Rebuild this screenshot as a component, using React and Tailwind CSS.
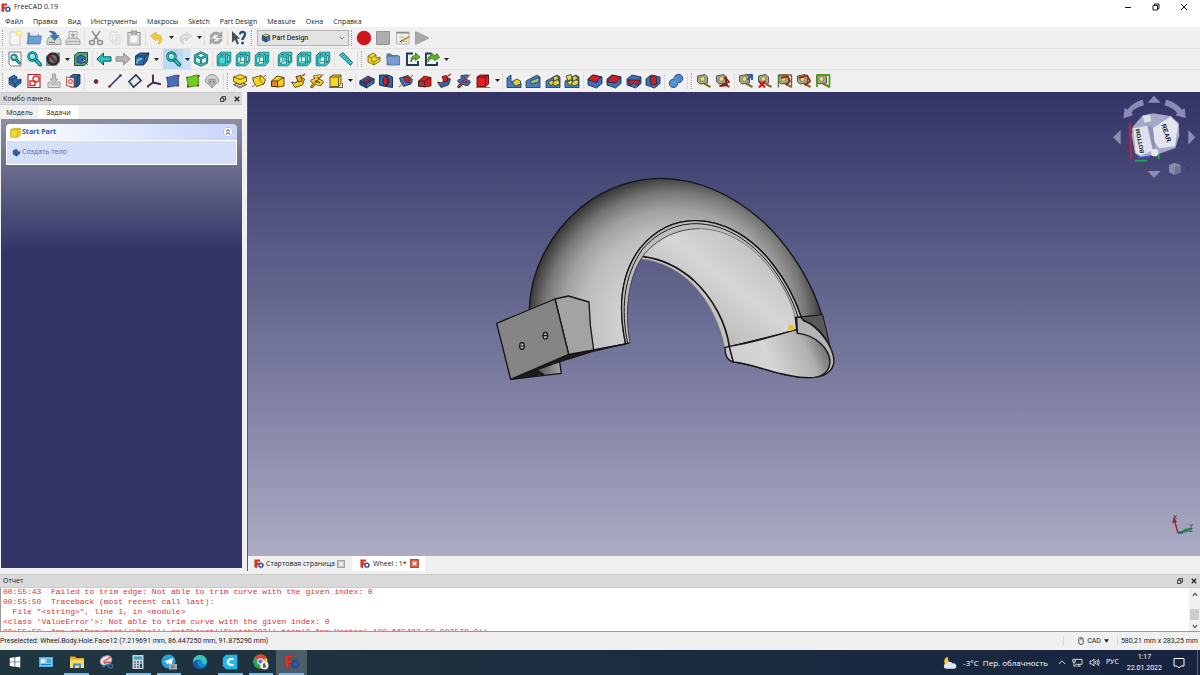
import { useState } from "react";
import clsx from "clsx";

const MENU = [
  "Файл",
  "Правка",
  "Вид",
  "Инструменты",
  "Макросы",
  "Sketch",
  "Part Design",
  "Measure",
  "Окна",
  "Справка",
];

const LOG = [
  "00:55:43  Failed to trim edge: Not able to trim curve with the given index: 0",
  "00:55:50  Traceback (most recent call last):",
  '  File "<string>", line 1, in <module>',
  "<class 'ValueError'>: Not able to trim curve with the given index: 0",
  "00:55:50  App.getDocument('Wheel').getObject('Sketch002').trim(0,App.Vector(-100.665482,50.087578,0))",
];

const TEAL = "#27c4c4";
const DARK = "#0c4a50";

/* ---------- icon building blocks, all on a 16x16 grid ---------- */

const Box = ({ top, left, right, line = "#1b2a3a" }) => (
  <g stroke={line} strokeWidth=".8" strokeLinejoin="round">
    <path d="M8 1.5 14 4 8 7 2 4Z" fill={top} />
    <path d="M2 4 8 7V14.5L2 11.5Z" fill={left} />
    <path d="M14 4 8 7V14.5L14 11.5Z" fill={right} />
  </g>
);

const ViewCube = ({ face }) => (
  <g strokeLinejoin="round" fill="none">
    <path d="M1.500 5 5.500 1.500H14.500V10.500L10.500 14.500H1.500Z" fill="#dff3f1" />
    <path d="M5.500 2V10.500H14M5.500 10.500 2 14" stroke="#3f9c9e" strokeWidth="1.200" />
    {face && <path d={face} fill="#4fd6d3" />}
    <g stroke={DARK} strokeWidth="2.400">
      <path d="M2 5H10.500V14H2ZM2 5 5.500 2H14V10.500L10.500 14M10.500 5 14 2" />
    </g>
    <g stroke="#35cfcd" strokeWidth="1.300">
      <path d="M2 5H10.500V14H2ZM2 5 5.500 2H14V10.500L10.500 14M10.500 5 14 2" />
    </g>
  </g>
);

const Lens = ({ cx = 6.5, cy = 5.5 }) => (
  <g>
    <path d={`M${cx + 2} ${cy + 2} 14 13.500`} stroke={DARK} strokeWidth="4" strokeLinecap="round" />
    <path d={`M${cx + 2} ${cy + 2} 14 13.500`} stroke={TEAL} strokeWidth="2.200" strokeLinecap="round" />
    <circle cx={cx} cy={cy} r="4" fill="#8fe3df" stroke={DARK} strokeWidth="2.400" />
    <circle cx={cx} cy={cy} r="4" fill="none" stroke={TEAL} strokeWidth="1.200" />
    <path d={`M${cx - 2} ${cy}a2 2 0 0 1 2-2`} stroke="#fff" fill="none" />
  </g>
);

const Slab = ({ body = "#3a6fb4", cut = "#cf1b20" }) => (
  <g stroke="#17243c" strokeWidth=".8" strokeLinejoin="round">
    <path d="M.8 8 9 3 15.200 6 7.500 11Z" fill={body} />
    <path d="M.8 8V11.500L7.500 15V11Z" fill="#234c87" />
    <path d="M15.200 6V10L7.500 15V11Z" fill={body} />
    <path d="M4.500 8 9.500 5 12.500 6.400 7.500 9.500Z" fill={cut} />
  </g>
);

const Revolve = ({ c }) => (
  <g strokeLinejoin="round">
    <path d="M1.500 5 10 2.500 14.500 6.500 13 11 5.500 13.500 3 9.500Z" fill={c} stroke="#43330a" strokeWidth=".8" />
    <path d="M10 2.500 8.500 7.500 13 11" fill="none" stroke="#43330a" strokeWidth=".6" />
    <path d="M1 14 3.500 12M12.500 4 15 2" stroke="#b11a1a" strokeWidth=".9" />
  </g>
);

const Loft = ({ c, b }) => (
  <g stroke="#43200a" strokeWidth=".8" strokeLinejoin="round">
    <path d="M1.500 8 7 3 14 4.500V13L8 14 1.500 13Z" fill={c} />
    <path d="M1.500 8H7.500V13.500H1.500Z" fill={b} />
    <path d="M7.500 8 14 4.500" />
  </g>
);

const Pipe = ({ c, b }) => (
  <g stroke="#43200a" strokeWidth=".8" strokeLinejoin="round">
    <path d="M1.500 9 6 10 10 4 14.500 6 12.500 12 5 14.500Z" fill={c} />
    <path d="M6 3.500 11 2.500 12 8 8 9Z" fill={b} />
    <path d="M12 3 15 1" stroke="#c11a1a" strokeWidth="1.400" />
  </g>
);

const Helix = ({ c }) => (
  <g fill="none" strokeLinecap="round" strokeLinejoin="round">
    <path d="M3 13.500 6 10 3 8 8 6 6 3.500 11 3M6 10 11 11.500 13 9 9 7" stroke="#3a1d12" strokeWidth="3.200" />
    <path d="M3 13.500 6 10 3 8 8 6 6 3.500 11 3M6 10 11 11.500 13 9 9 7" stroke={c} strokeWidth="2" />
    <path d="M2 14.500 14 1.500" stroke="#c02020" strokeWidth=".9" />
  </g>
);

const Pattern = ({ n }) => (
  <g stroke="#1c3153" strokeWidth=".8" strokeLinejoin="round">
    <path d={n === 0 ? "M1 5 5 2V9L12 8 15 10V14.500H1Z" : "M1 8 12 2 15 4V14.500H1Z"} fill="#4a80c2" />
    <path
      d={n === 1 ? "M5 8 14 4.500V9L6 11Z" : "M7 8 11 6 14.500 8V11L10 13 7 11Z"}
      fill={n === 1 ? "#9fc36a" : "#e9cf25"}
    />
    {n > 1 && <path d="M3 9 7 7 9 9 6 13ZM8 4 12 2.500 14 6 9 8Z" fill="#e9cf25" />}
    {n === 3 && <path d="M2 3 7 1.500 8 6 4 8Z" fill="#f4df2d" />}
  </g>
);

const Dress = ({ d }) => (
  <g stroke="#17243c" strokeWidth=".8" strokeLinejoin="round">
    <path d="M1 6 6 2 15 4V10.500L9.500 15 1 12Z" fill="#3a70b8" />
    <path d={d} fill="#d61d24" />
  </g>
);

const Tape = ({ children }) => (
  <g strokeLinejoin="round">
    <path d="M1.500 3 9 1.500 11.500 4V10L4 11 1.500 8.500Z" fill="#a5a698" stroke="#55564a" strokeWidth="1" />
    <circle cx="6.500" cy="6" r="2.400" fill="#e8df72" stroke="#6c6726" strokeWidth=".6" />
    <path d="M8 10.500 14.500 14" stroke="#7a7128" strokeWidth="2" />
    {children}
  </g>
);

const FreeCadMark = () => (
  <g>
    <circle cx="11" cy="10" r="3" fill="none" stroke="#234ca6" strokeWidth="2" />
    <circle cx="11" cy="10" r="4.300" fill="none" stroke="#234ca6" strokeWidth="1.200" strokeDasharray="1.700 1.680" />
    <path d="M1 1H9.500V3.800H4.800V6.500H7.800V9.200H4.800V14.500L1 13.200Z" fill="#e0302a" stroke="#9c1a18" strokeWidth=".4" />
  </g>
);

const ICONS = {
  New: (
    <g>
      <path d="M3 2H11L13 4V15H3Z" fill="#f4f4f2" stroke="#bdbdb8" strokeWidth=".8" />
      <circle cx="12" cy="3.500" r="3" fill="#f6ee62" />
      <circle cx="12" cy="3.500" r="1.200" fill="#fffde0" />
    </g>
  ),
  Open: (
    <g>
      <path d="M1.500 2.500H6L7.500 4H13V13H1.500Z" fill="#7d8fa5" />
      <path d="M4 1.500H12V6H4Z" fill="#e6e8ea" />
      <path d="M3 6H15.500L14 14H1Z" fill="#6e9fd4" stroke="#49709e" strokeWidth=".7" />
    </g>
  ),
  Save: (
    <g>
      <path d="M3 7H13L15 10.500V14.500H1V10.500Z" fill="#d6d8d6" stroke="#8f9292" strokeWidth=".8" />
      <path d="M3 12.500H9" stroke="#777" />
      <path d="M3 1.500C7 .8 10.500 2 10.500 5.500H13L8.500 10.500 4.500 5.500H7C7 3.500 5.500 2.500 3 1.500Z" fill="#3c78b8" stroke="#2a5787" strokeWidth=".6" />
    </g>
  ),
  Print: (
    <g fill="#dadada" stroke="#a5a5a5" strokeWidth=".9">
      <path d="M3 8H13L15 10.500V14.500H1V10.500Z" />
      <path d="M1 11.500H15" />
      <path d="M4 1.500H12V8H4Z" fill="#ededed" />
      <path d="M8 2V5M6 4.500H10L8 7Z" fill="#aaa" />
    </g>
  ),
  Cut: (
    <g fill="none" stroke="#8e8e8e" strokeWidth="1.500">
      <path d="M4 1 10.500 10.500M12 1 5.500 10.500" />
      <ellipse cx="4" cy="12.500" rx="2.500" ry="2" />
      <ellipse cx="12" cy="12.500" rx="2.500" ry="2" />
    </g>
  ),
  Copy: (
    <g fill="#f2f2f2" stroke="#d5d5d5" strokeWidth=".9">
      <path d="M3 2H10V11H3ZM6 5H13V14H6Z" />
      <path d="M8 8H11.500M8 10H11.500M8 12H10.500" />
    </g>
  ),
  Paste: (
    <g fill="#e4e4e0" stroke="#9a9a94" strokeWidth="1.100">
      <path d="M2 2.500H14V15H2Z" />
      <path d="M4 5H12V13H4Z" fill="#f6f6f4" stroke="#ccc" />
      <path d="M5.500 1H10.500V4H5.500Z" fill="#b8b8b4" />
    </g>
  ),
  Undo: <path d="M1.500 6 7 2V4.500C11.500 4.500 14 7 12.500 11.500 11.800 13 10.500 14 9 14 11 11.500 10.500 8.500 7 8.500V11Z" fill="#f0cb3e" stroke="#d3aa2a" strokeWidth=".7" />,
  Redo: <path d="M14.500 6 9 2V4.500C4.500 4.500 2 7 3.500 11.500 4.200 13 5.500 14 7 14 5 11.500 5.500 8.500 9 8.500V11Z" fill="#dcdcdc" stroke="#c4c4c4" strokeWidth=".7" />,
  Refresh: (
    <g fill="#a9a9a9" stroke="#8a8a8a" strokeWidth=".5">
      <path d="M2 7.500C2 2.500 8.500.5 12 3.500L14 1.500V7.500H8.500L10.500 5.500C8.500 3.500 5 4.500 4.500 7.500Z" />
      <path d="M14 9C14 13.500 7.500 15.500 4 12.500L2 14.500V9H7.500L5.500 11C7.500 12.500 11 11.500 11.500 9Z" />
    </g>
  ),
  "What's this": (
    <g>
      <path d="M1 1 9 8.500 6 9 8 13.500 6 14.500 4 10 1 12.500Z" fill="#4a5258" />
      <path d="M9 4.500C9 1 14 1 14 4.500 14 7 11.500 7 11.500 10" fill="none" stroke="#274c77" strokeWidth="2.300" />
      <circle cx="11.500" cy="13" r="1.500" fill="#274c77" />
    </g>
  ),
  Record: <circle cx="8" cy="8" r="6.900" fill="#d3151c" stroke="#8f1015" strokeWidth=".6" />,
  Stop: <path d="M1.500 1.500H14.500V14.500H1.500Z" fill="#adadad" stroke="#949494" />,
  Macros: (
    <g>
      <path d="M1.500 2H14V14H1.500Z" fill="#eeeee9" stroke="#b7b7ad" />
      <path d="M1.500 2H14V3.500H1.500Z" fill="#8e8e86" />
      <path d="M4 7H9M4 11.500H12" stroke="#b5b5ac" />
      <path d="M6.500 11 14.500 6.500" stroke="#c9912f" strokeWidth="2" />
      <path d="M5 12 7 10" stroke="#333" />
    </g>
  ),
  Play: <path d="M1.500 1.500 15 8 1.500 14.500Z" fill="#a8a8a8" stroke="#8e8e8e" strokeWidth=".7" />,

  "Fit all": (
    <g>
      <path d="M2 1H14V15H4L2 13Z" fill="#f7f7f5" stroke="#70706a" strokeWidth=".9" />
      <g transform="translate(2.500 2.500) scale(.7)">
        <Lens />
      </g>
    </g>
  ),
  "Fit selection": <Lens />,
  "Draw style": (
    <g>
      <path d="M1 5 5 1.500H15V11L11.500 15H1Z" fill="#5d9a9c" />
      <circle cx="8" cy="8" r="5.200" fill="#567a7c" stroke="#222" strokeWidth="2.600" />
      <path d="M4.500 4.500 11.500 11.500" stroke="#8d1a24" strokeWidth="2" />
      <circle cx="8" cy="8" r="5.200" fill="none" stroke="#7c2229" strokeWidth=".8" />
    </g>
  ),
  "Bounding box": (
    <g>
      <path d="M1.500 4 5 1.500H14.500V11.500L11 14.500H1.500Z" fill="#5aa277" stroke="#1d5c37" />
      <path d="M4 6 8 4 12 6V11L8 12.500 4 11Z" fill="#2d6fae" stroke="#143a63" strokeWidth=".8" />
      <path d="M9 8 15 14M9 8 13 9 10.500 12Z" fill="#fff" stroke="#222" strokeWidth=".7" />
    </g>
  ),
  Back: <path d="M.8 8 7.500 2V5.800H15V10.200H7.500V14Z" fill={TEAL} stroke={DARK} strokeWidth=".9" strokeLinejoin="round" />,
  Forward: <path d="M15.200 8 8.500 2V5.800H1V10.200H8.500V14Z" fill="#b4b4b4" stroke="#8a8a8a" strokeWidth=".9" strokeLinejoin="round" />,
  "Linked object": (
    <g>
      <path d="M1.500 5 6 2H15L13 10 9.500 14H1.500Z" fill="#3268a2" stroke="#132c48" strokeWidth=".9" />
      <path d="M1.500 5H10.500L15 2M10.500 5 9.500 14" fill="none" stroke="#132c48" strokeWidth=".8" />
      <path d="M3 12.500C3 9 5 7.500 8 8" fill="none" stroke="#54c7d0" strokeWidth="2" />
    </g>
  ),
  Zoom: <Lens />,
  Isometric: (
    <g fill="none" strokeLinejoin="round">
      <path d="M8 1.500 14 4.500V11.500L8 14.500 2 11.500V4.500Z" fill="#dff3f1" />
      <path d="M8 1.500 14 4.500V11.500L8 14.500 2 11.500V4.500ZM2 4.500 8 7.500 14 4.500M8 7.500V14.500" stroke={DARK} strokeWidth="2.200" />
      <path d="M8 1.500 14 4.500V11.500L8 14.500 2 11.500V4.500ZM2 4.500 8 7.500 14 4.500M8 7.500V14.500" stroke="#35c4c4" strokeWidth="1.100" />
    </g>
  ),
  Front: <ViewCube face="M2 5H10.500V14H2Z" />,
  Top: <ViewCube face="M2 5 5.500 2H14L10.500 5Z" />,
  Right: <ViewCube face="M10.500 5 14 2V10.500L10.500 14Z" />,
  Rear: <ViewCube face="M5.500 5H10.500V10.500H5.500Z" />,
  Bottom: <ViewCube face="M2 14 5.500 10.500H10.500V14Z" />,
  Left: <ViewCube face="M2 5H5.500V10.500L2 14Z" />,
  Measure: (
    <g>
      <path d="M1.500 4 5 1.500 14.500 11.500 12.500 14.500Z" fill="#35cbc9" stroke={DARK} strokeWidth=".8" />
      <path d="M5 5 6.500 3.700M7.500 7.500 9 6.200M10 10 11.500 8.700" stroke={DARK} strokeWidth=".6" />
    </g>
  ),
  Part: (
    <g fill="#f0d92b" stroke="#6c5b0c" strokeWidth=".8" strokeLinejoin="round">
      <path d="M2 5 7 2 10 4V7L14 6V10L8 14 2 11Z" />
      <path d="M2 5 5.500 7V10L8 11V14M5.500 7 10 4M8 11 14 7" fill="none" />
    </g>
  ),
  Group: (
    <g>
      <path d="M1.500 2.500H6L7 4H13V7H1.500Z" fill="#5d7899" />
      <path d="M2 5H14.500V14H2Z" fill="#749ccd" stroke="#476b97" strokeWidth=".8" />
    </g>
  ),
  "Make link": (
    <g fill="none">
      <path d="M8 2.500H2V14H13V10" stroke="#1c3a4a" strokeWidth="1.900" />
      <path d="M6 11C5.500 6.500 8 4.500 10.500 4.500V2L15 6 10.500 9.500V7.500C8.500 7.500 7 8.500 6 11Z" fill="#62b02e" stroke="#2e6b12" strokeWidth=".8" />
    </g>
  ),
  "Link actions": (
    <g fill="none">
      <path d="M7 2.500H2V14H13V11" stroke="#1c3a4a" strokeWidth="1.900" />
      <path d="M4 11C3.500 6.500 5 4.500 7.500 4.500V2L11 5 13 2.500 15.500 6.500 11 9.500 8.500 7.500C6.500 7.500 5 8.500 4 11Z" fill="#62b02e" stroke="#2e6b12" strokeWidth=".8" />
    </g>
  ),

  Body: (
    <g stroke="#122b50" strokeWidth=".7" strokeLinejoin="round">
      <path d="M2 5 7 2 10 4V7L14 6V10L8 14.500 2 11Z" fill="#3a6faa" />
      <path d="M2 5 5.500 7V10L8 11V14.500M5.500 7 10 4M8 11 14 7" fill="none" />
    </g>
  ),
  "New sketch": (
    <g fill="none">
      <path d="M2 1.500H14V14.500H2Z" fill="#fff" stroke="#b7222a" strokeWidth="1.100" />
      <circle cx="10" cy="6" r="3" stroke="#d33" strokeWidth="1.400" />
      <path d="M4 8H9V12.500H4Z" stroke="#d33" strokeWidth="1.400" />
    </g>
  ),
  "Edit sketch": (
    <g fill="#d8d8d8" stroke="#9b9b9b" strokeWidth=".9">
      <path d="M2 9H5V11H11V9H14V14.500H2Z" />
      <path d="M6.500 1H9.500V6H12L8 10.500 4 6H6.500Z" fill="#c4c4c4" />
    </g>
  ),
  "Map sketch": (
    <g>
      <path d="M5 3.500 8 1.500H15V11L12 14H5Z" fill="#2d62a0" stroke="#132c48" strokeWidth=".8" />
      <path d="M12 4 15 1.500M12 4V14" stroke="#132c48" strokeWidth=".8" />
      <path d="M1.500 4 9 5V14.500L1.500 12.500Z" fill="#f4e8e8" stroke="#a33" strokeWidth=".8" />
      <circle cx="5.500" cy="8.500" r="1.900" fill="none" stroke="#c22" />
    </g>
  ),
  Point: <circle cx="8" cy="8.500" r="1.900" fill="#8a2036" stroke="#3b3355" strokeWidth=".9" />,
  Line: (
    <g>
      <path d="M2.500 13.500 13.500 2.500" stroke="#26476f" strokeWidth="1.700" />
      <circle cx="2.500" cy="13.500" r="1.300" fill="#7f2030" />
      <circle cx="13.500" cy="2.500" r="1.300" fill="#7f2030" />
    </g>
  ),
  Plane: (
    <g>
      <path d="M6.500 14 2 8.500 9 2 14 7.500Z" fill="#e8ebf0" stroke="#223b5c" strokeWidth="1.600" />
      <path d="M9 1.500V2.500M14 7V8M2 8V9M6.500 13.500V14.500" stroke="#7f2030" strokeWidth="2" />
    </g>
  ),
  Axes: (
    <g>
      <path d="M7 2V9.500L1.500 13.500M7 9.500 14 11" fill="none" stroke="#3b3350" strokeWidth="1.900" />
      <path d="M7 1.500V3.500M1 13.500H3M13 11H15" stroke="#a11f2b" strokeWidth="2.200" />
    </g>
  ),
  "Shape binder": (
    <g>
      <path d="M2 4C6 5 9 1 14 2.500 12 6 15 9 13 13 9 12 6 15 2.500 13.500 4 10 1 7 2 4Z" fill="#4670b6" stroke="#1e3a70" strokeWidth=".8" />
      <path d="M2 4V5M13.500 2V4M12.500 12.500H14M2 13.500H4" stroke="#b02030" strokeWidth="2" />
    </g>
  ),
  "Sub shape binder": (
    <g>
      <path d="M2 4C6 5 9 1 14 2.500 12 6 15 9 13 13 9 12 6 15 2.500 13.500 4 10 1 7 2 4Z" fill="#70cf20" stroke="#347608" strokeWidth=".9" />
      <path d="M2 4V5M13.500 2V4M12.500 12.500H14M2 13.500H4" stroke="#903020" strokeWidth="2" />
    </g>
  ),
  Clone: (
    <g fill="#cdcdcd" stroke="#8f8f8f" strokeWidth=".9">
      <path d="M1.500 9C1 4 5 1.500 8 1.500S15 4 14.500 9L12 11H4Z" />
      <path d="M5 6.500H11V11.500L8 15 5 11.500Z" fill="#b5b5b5" />
      <path d="M6.500 8V9.500M9.500 8V9.500" stroke="#666" />
    </g>
  ),

  Pad: (
    <g stroke="#5b4a0c" strokeWidth=".8" strokeLinejoin="round">
      <path d="M1.500 11.500 8 9 14.500 11.500 8 15Z" fill="#aab0b8" />
      <path d="M1.500 4 8 1.500 14.500 4V8.500L8 11.500 1.500 8.500Z" fill="#f3d629" />
      <path d="M1.500 4 8 6.500 14.500 4" fill="none" />
    </g>
  ),
  Revolution: <Revolve c="#f1d625" />,
  Loft: <Loft c="#f0d020" b="#e8861e" />,
  "Additive pipe": <Pipe c="#f0d020" b="#e8b020" />,
  "Additive helix": <Helix c="#f2d727" />,
  "Additive box": (
    <g>
      <path d="M2 4 5 2H13V11L10.500 13.500H2Z" fill="#f3d629" stroke="#5b4a0c" strokeWidth=".9" />
      <path d="M2 4H10.500L13 2M10.500 4V13.500" fill="none" stroke="#5b4a0c" strokeWidth=".9" />
      <path d="M1 14.500H15M14.500 14V10" stroke="#444" strokeWidth=".8" />
    </g>
  ),
  Pocket: <Slab />,
  Hole: (
    <g stroke="#17243c" strokeWidth=".9">
      <path d="M1.500 2H10L14.500 4V14.500L5 13 1.500 12Z" fill="#2f66ac" />
      <ellipse cx="8" cy="8" rx="3" ry="4.500" fill="#d61d24" />
      <path d="M8 4C10 6 10 10 8 12.500" fill="none" />
    </g>
  ),
  Groove: (
    <g>
      <Revolve c="#3a70b8" />
      <path d="M6 4 12 5 11 10 7 8Z" fill="#d61d24" stroke="#601015" strokeWidth=".6" />
    </g>
  ),
  "Subtractive loft": <Loft c="#d61d24" b="#8a3a5c" />,
  "Subtractive pipe": <Pipe c="#2f66ac" b="#d61d24" />,
  "Subtractive helix": <Helix c="#3a70b5" />,
  "Subtractive box": (
    <g>
      <path d="M2 4 5 2H13.500V11L10.500 13.500H2Z" fill="#dc1f26" stroke="#5c0c10" strokeWidth=".9" />
      <path d="M2 4H10.500L13.500 2M10.500 4V13.500" fill="none" stroke="#5c0c10" strokeWidth=".9" />
      <path d="M1 14.500H15" stroke="#555" strokeWidth=".8" />
    </g>
  ),
  Mirrored: <Pattern n={0} />,
  "Linear pattern": <Pattern n={1} />,
  "Polar pattern": <Pattern n={2} />,
  "Multi transform": <Pattern n={3} />,
  Fillet: <Dress d="M1 7C3 4 5 2 6 2L15 4C12 5 10.500 7 10 9.500Z" />,
  Chamfer: <Dress d="M1 9 6 2 15 4 9.500 10Z" />,
  Draft: <Dress d="M2 7H14L12 13 8 9.500 4 12.500Z" />,
  Thickness: <Dress d="M5 3.500 11 3 12 11 6 12Z" />,
  Boolean: (
    <g stroke="#1d3d6b" strokeWidth=".9">
      <circle cx="10.500" cy="5.500" r="4.200" fill="#4b86cc" />
      <circle cx="5.500" cy="10.300" r="4.200" fill="#5590d4" />
      <path d="M6.500 5.200 10.500 9.500" stroke="#5590d4" strokeWidth="2.500" />
    </g>
  ),
  "Measure linear": <Tape />,
  "Measure angular": (
    <Tape>
      <path d="M5 13 12 12 10 4 14 9Z" fill="none" stroke="#8f1d1d" strokeWidth="1.800" />
    </Tape>
  ),
  "Measure refresh": (
    <Tape>
      <path d="M9 2H14V7M14 2 9.500 7" fill="none" stroke="#2c63ad" strokeWidth="2" />
    </Tape>
  ),
  "Measure clear": (
    <Tape>
      <path d="M2 8 8 14.500M8 8 2 14.500" stroke="#c4161c" strokeWidth="2" />
    </Tape>
  ),
  "Toggle all": (
    <Tape>
      <path d="M1.500 14.500V2H14.500V14.500" fill="none" stroke="#5a7330" strokeWidth="1.400" />
      <path d="M4 5 11 3.500 13 8 9 12" fill="none" stroke="#a32a1c" strokeWidth="1.800" />
    </Tape>
  ),
  "Toggle 3d": (
    <Tape>
      <path d="M3 5 11 2.500 14 8 9 12.500" fill="none" stroke="#a32a1c" strokeWidth="2" />
    </Tape>
  ),
  "Toggle delta": (
    <Tape>
      <path d="M2 14V2H14.500V14.500" fill="none" stroke="#4d9a24" strokeWidth="1.800" />
    </Tape>
  ),
};

/* ---------- toolbars ---------- */

const Icon = ({ name }) => (
  <svg viewBox="0 0 16 16" className="size-4 shrink-0" aria-hidden="true">
    {ICONS[name]}
  </svg>
);

// buttons share the group's width evenly
const Group = ({ width, names, active }) => (
  <div className={clsx("flex h-full items-center", width)}>
    {names.map((name) => (
      <button
        key={name}
        type="button"
        aria-label={name}
        className={clsx("flex h-full min-w-0 flex-1 items-center justify-center", active && "bg-[#b9d9f1]")}
      >
        <Icon name={name} />
      </button>
    ))}
  </div>
);

const More = ({ active }) => (
  <button
    type="button"
    aria-label="Ещё"
    className={clsx("flex h-full w-2 shrink-0 items-center justify-center", active && "bg-[#cfe3f5]")}
  >
    <svg viewBox="0 0 5 3" className="h-[3px] w-[5px]">
      <path d="M0 0H5L2.500 3Z" fill="#222" />
    </svg>
  </button>
);

const Sep = () => <div className="mx-px h-4 w-px shrink-0 bg-[#dcdcdc]" />;
const Handle = () => <div className="mx-0.5 h-4 shrink-0 border-l border-dotted border-[#a8a8a8]" />;

const Toolbars = () => (
  <div className="bg-[#f0f0f0] pb-px">
    <div className="flex h-[22px] items-center border-b border-[#e2e2e2]">
      <Handle />
      <Group width="w-[78px]" names={["New", "Open", "Save", "Print"]} />
      <Sep />
      <Group width="w-[58px]" names={["Cut", "Copy", "Paste"]} />
      <Sep />
      <Group width="w-5" names={["Undo"]} />
      <More />
      <Group width="w-5" names={["Redo"]} />
      <More />
      <Sep />
      <Group width="w-5" names={["Refresh"]} />
      <Sep />
      <Group width="w-5" names={["What's this"]} />
      <Handle />
      <label className="relative ml-[3px] flex items-center">
        <svg viewBox="0 0 16 16" className="absolute left-1 size-[10px]">
          <Box top="#e8d32a" left="#2c5f9f" right="#3d77bd" />
        </svg>
        <select
          aria-label="Верстак"
          className="h-4 w-[92px] appearance-none border border-[#b4b4b4] bg-[#e3e3e3] pl-[14px] font-[Roboto,sans-serif] text-[7px] leading-3 text-black"
        >
          <option>Part Design</option>
        </select>
        <svg viewBox="0 0 8 5" className="absolute right-1 h-[4px] w-[6px]">
          <path d="M1 1 4 4 7 1" fill="none" stroke="#555" />
        </svg>
      </label>
      <Handle />
      <Group width="w-[78px]" names={["Record", "Stop", "Macros", "Play"]} />
    </div>

    <div className="flex h-[21px] items-center border-b border-[#e2e2e2]">
      <Handle />
      <Group width="w-[58px]" names={["Fit all", "Fit selection", "Draw style"]} />
      <More />
      <Group width="w-5" names={["Bounding box"]} />
      <Sep />
      <Group width="w-[58px]" names={["Back", "Forward", "Linked object"]} />
      <More />
      <Sep />
      <Group width="w-5" names={["Zoom"]} active />
      <More active />
      <Group width="w-5" names={["Isometric"]} />
      <Sep />
      <Group width="w-[58px]" names={["Front", "Top", "Right"]} />
      <Sep />
      <Group width="w-[58px]" names={["Rear", "Bottom", "Left"]} />
      <Sep />
      <Group width="w-5" names={["Measure"]} />
      <Sep />
      <Handle />
      <Group width="w-[78px]" names={["Part", "Group", "Make link", "Link actions"]} />
      <More />
    </div>

    <div className="flex h-[21px] items-center">
      <Handle />
      <Group width="w-[78px]" names={["Body", "New sketch", "Edit sketch", "Map sketch"]} />
      <Sep />
      <Group
        width="w-[136px]"
        names={["Point", "Line", "Plane", "Axes", "Shape binder", "Sub shape binder", "Clone"]}
      />
      <Sep />
      <Handle />
      <Group
        width="w-[116px]"
        names={["Pad", "Revolution", "Loft", "Additive pipe", "Additive helix", "Additive box"]}
      />
      <More />
      <Sep />
      <Group
        width="w-[136px]"
        names={["Pocket", "Hole", "Groove", "Subtractive loft", "Subtractive pipe", "Subtractive helix", "Subtractive box"]}
      />
      <More />
      <Sep />
      <Group width="w-[78px]" names={["Mirrored", "Linear pattern", "Polar pattern", "Multi transform"]} />
      <Sep />
      <Group width="w-[78px]" names={["Fillet", "Chamfer", "Draft", "Thickness"]} />
      <Sep />
      <Group width="w-5" names={["Boolean"]} />
      <Sep />
      <Handle />
      <Group width="w-[39px]" names={["Measure linear", "Measure angular"]} />
      <Sep />
      <Group
        width="w-[97px]"
        names={["Measure refresh", "Measure clear", "Toggle all", "Toggle 3d", "Toggle delta"]}
      />
    </div>
  </div>
);

/* ---------- window pieces ---------- */

const DockButtons = () => (
  <div className="flex items-center gap-2">
    <button type="button" aria-label="Открепить">
      <svg viewBox="0 0 8 8" className="size-[6px]" fill="none" stroke="#222" strokeWidth="1.200">
        <path d="M.6 3H5V7.400H.6ZM2.500 3V.8H7.400V5.500H5" />
      </svg>
    </button>
    <button type="button" aria-label="Закрыть">
      <svg viewBox="0 0 8 8" className="size-[6px]" fill="none" stroke="#222" strokeWidth="1.600">
        <path d="M1 1 7 7M7 1 1 7" />
      </svg>
    </button>
  </div>
);

const TitleBar = () => (
  <header className="bg-white">
    <div className="flex h-[14px] items-center justify-between">
      <div className="flex items-center gap-[3px] pt-px pl-px text-[7px]">
        <svg viewBox="0 0 16 16" className="size-[10px]">
          <FreeCadMark />
        </svg>
        FreeCAD 0.19
      </div>
      <div className="flex items-center gap-5 pr-3 text-black">
        <button type="button" aria-label="Свернуть">
          <svg viewBox="0 0 8 8" className="size-2">
            <path d="M1 4.500H7" stroke="currentColor" strokeWidth=".9" />
          </svg>
        </button>
        <button type="button" aria-label="Развернуть">
          <svg viewBox="0 0 8 8" className="size-2" fill="none" stroke="currentColor" strokeWidth=".9">
            <path d="M1 2.500H5.500V7H1ZM2.500 2.500V1H7V5.500H5.500" />
          </svg>
        </button>
        <button type="button" aria-label="Закрыть">
          <svg viewBox="0 0 8 8" className="size-2">
            <path d="M1 1 7 7M7 1 1 7" stroke="currentColor" strokeWidth=".9" />
          </svg>
        </button>
      </div>
    </div>
    <nav className="flex h-[13px] items-center gap-[10px] pt-0.5 pl-[5px] text-[7px] leading-none">
      {MENU.map((item) => (
        <button key={item} type="button">
          {item}
        </button>
      ))}
    </nav>
  </header>
);

const ComboPanel = () => {
  const [tab, setTab] = useState("Задачи");

  return (
    <aside className="flex w-[242px] shrink-0 flex-col">
      <div className="flex h-[13px] shrink-0 items-center justify-between border-y border-[#c9c9c9] bg-[#d9d9d9] pr-[2px] pl-[3px] text-[7px] leading-none">
        Комбо панель
        <DockButtons />
      </div>
      <div className="flex h-[14px] shrink-0 items-end text-[7px] leading-none">
        {["Модель", "Задачи"].map((name) => (
          <button
            key={name}
            type="button"
            onClick={() => setTab(name)}
            className={clsx("h-[13px] w-[39px]", tab === name && "bg-white")}
          >
            {name}
          </button>
        ))}
      </div>
      <div className="ml-px flex-1 bg-[#333366] bg-linear-to-b from-[#8f8fa3] to-[#333366] to-[134px] p-[5px]">
        <div className="flex h-4 items-center justify-between rounded-t-sm bg-linear-to-r from-white to-[#c8d5fa] px-1">
          <div className="flex items-center gap-px text-[7px] font-bold text-[#1f57b5]">
            <svg viewBox="0 0 16 16" className="size-[11px]">
              <path d="M1 4 5 2H15V12L11 15H1Z" fill="#f3d82c" stroke="#b59b1c" />
              <path d="M1 4H11V15M11 4 15 2" fill="none" stroke="#b59b1c" />
            </svg>
            <h2>Start Part</h2>
          </div>
          <button type="button" aria-label="Свернуть раздел">
            <svg viewBox="0 0 12 12" className="size-[10px]">
              <circle cx="6" cy="6" r="5.500" fill="#fff" stroke="#b8c4e4" />
              <path d="M3.500 5.500 6 3.200 8.500 5.500M3.500 9 6 6.700 8.500 9" fill="none" stroke="#1d3b70" strokeWidth="1.200" />
            </svg>
          </button>
        </div>
        <div className="flex h-[25px] items-center border border-white bg-[#d6dff8] pl-[5px]">
          <a href="#body" className="flex items-center gap-px text-[7px] text-[#3c6bc4]">
            <svg viewBox="0 0 16 16" className="size-[9px]">
              {ICONS.Body}
            </svg>
            Создать тело
          </a>
        </div>
      </div>
      <div className="h-[3px] shrink-0" />
    </aside>
  );
};

const Model = () => (
  <svg x="480" y="160" width="370" height="230" viewBox="0 0 1110 690" strokeLinejoin="round" strokeLinecap="round">
    <defs>
      <radialGradient id="shell" gradientUnits="userSpaceOnUse" cx="585" cy="490" r="448">
        <stop offset=".35" stopColor="#d2d2d2" />
        <stop offset=".62" stopColor="#bdbdbd" />
        <stop offset=".76" stopColor="#a2a2a2" />
        <stop offset=".88" stopColor="#777" />
        <stop offset="1" stopColor="#333" />
      </radialGradient>
      <linearGradient id="inside" x1="0" y1="1" x2="1" y2="0">
        <stop offset="0" stopColor="#8a8a8a" />
        <stop offset=".3" stopColor="#bdbdbd" />
        <stop offset=".55" stopColor="#d6d6d6" />
        <stop offset="1" stopColor="#b0b0b0" />
      </linearGradient>
      <linearGradient id="mouth" x1="0" y1=".2" x2="1" y2="0">
        <stop offset="0" stopColor="#cfcfcf" />
        <stop offset=".3" stopColor="#d6d6d6" />
        <stop offset=".7" stopColor="#b0b0b0" />
        <stop offset="1" stopColor="#4c4c4c" />
      </linearGradient>
      <linearGradient id="foot">
        <stop offset=".4" stopColor="#3a3a3a" />
        <stop offset="1" stopColor="#a8a8a8" />
      </linearGradient>
    </defs>

    {/* inner wall of the far half */}
    <path
      d="M485 290C520 225 590 200 660 203C745 210 820 255 870 320C910 375 938 430 948 472L950 510L745 560C735 500 690 410 630 360C590 325 540 297 485 290Z"
      fill="url(#inside)"
    />
    {/* outer shell */}
    <path
      d="M148 445C152 330 210 220 300 145C375 82 465 55 545 55C660 57 765 110 850 185C940 270 1000 380 1026 466L962 471C945 415 915 360 880 315C820 235 735 182 645 182C590 182 530 205 480 265C420 345 415 450 437 552L341 570L240 590L150 470Z"
      fill="url(#shell)"
      stroke="#161616"
      strokeWidth="4"
    />
    {/* lip of the shell */}
    <path
      d="M437 552C415 450 420 345 480 265C530 205 590 182 645 182C735 182 820 235 880 315C915 360 945 415 962 471L945 472C935 420 905 370 868 322C810 250 735 205 655 206C590 207 535 235 495 280C450 335 430 440 450 549Z"
      fill="#bdbdbd"
    />
    <g fill="none" stroke="#151515">
      <path d="M437 552C415 450 420 345 480 265C530 205 590 182 645 182C735 182 820 235 880 315C915 360 945 415 964 471" strokeWidth="4" />
      <path d="M443 550C422 450 430 350 487 268C535 212 595 191 648 191C735 192 812 242 873 318C908 363 938 418 954 471" strokeWidth="3" />
      <path d="M450 549C430 440 450 335 495 280C535 235 590 207 655 206" stroke="#333" strokeWidth="2.500" />
      <path d="M655 206C735 205 810 250 868 322C905 370 935 420 945 472" stroke="#666" strokeWidth="2.500" />
    </g>

    {/* lower lip */}
    <path
      d="M488 290C545 297 600 325 640 360C700 415 738 490 748 560L760 606C742 600 735 580 734 563C722 500 690 425 635 370C595 332 548 305 485 297Z"
      fill="#c4c4c4"
    />
    <path d="M490 290C545 297 600 325 640 360C700 415 738 490 748 560" fill="none" stroke="#151515" strokeWidth="5" />
    <path d="M485 297C548 305 595 332 635 370C690 425 722 500 734 563" fill="none" stroke="#777" strokeWidth="2" />

    {/* open mouth at the right end */}
    <path
      d="M962 471 1028 464C1034 490 1042 520 1050 560C1030 515 1000 490 966 478Z"
      fill="#585858"
      stroke="#161616"
      strokeWidth="3"
    />
    <path
      d="M946 472 962 471 970 482C1015 498 1062 560 1062 605C1058 640 1030 653 985 653C900 652 830 612 760 606L748 560L950 510Z"
      fill="#b4b4b4"
      stroke="#161616"
      strokeWidth="4"
    />
    <path
      d="M748 559C820 548 880 528 950 509L953 520C1005 524 1048 565 1050 605C1048 640 1025 653 985 653C900 652 830 612 760 606Z"
      fill="url(#mouth)"
      stroke="#161616"
      strokeWidth="4"
    />
    <path d="M950 472 952 520M734 563 748 559M735 563C735 590 746 603 760 606" fill="none" stroke="#161616" strokeWidth="4" />

    {/* mounting block */}
    <path d="M92 658 238 600 244 640Z" fill="url(#foot)" stroke="#161616" strokeWidth="4" />
    <path d="M92 658 266 583 341 570 448 549 341 574 238 606 170 630 190 642Z" fill="#1c1c1c" stroke="#161616" strokeWidth="3" />
    <path d="M225 417 265 408 327 426 331 495 341 570 266 583Z" fill="#a3a3a3" stroke="#161616" strokeWidth="4" />
    <path d="M50 490 225 417 266 583 92 658Z" fill="#858585" stroke="#161616" strokeWidth="4" />
    <g fill="#b4b4b4" stroke="#161616" strokeWidth="3.500">
      <ellipse cx="126" cy="558" rx="7" ry="10" />
      <ellipse cx="196" cy="527" rx="7" ry="10" />
      <path d="M119 558H133M189 527H203" />
    </g>
    <circle cx="933" cy="503" r="9" fill="#f0c420" />
  </svg>
);

const NavigationCube = () => (
  <svg viewBox="0 0 300 279" className="absolute top-0 right-0 h-[93px] w-[100px]">
    <g fill="#9a9ac0" opacity=".85">
      <path d="M143 32 162 11 182 32Z" />
      <path d="M143 237H182L162 258Z" />
      <path d="M39 136 62 114V158Z" />
      <path d="M286 136 265 114V158Z" />
      <path d="M128 23 132 40C112 45 102 52 94 62L99 70 70 79 74 48 82 53C94 38 108 28 128 23Z" />
      <path d="M198 23 194 40C212 45 225 54 232 64L226 70 257 78 254 48 246 53C234 38 218 27 198 23Z" />
    </g>
    <path d="M89 94 94 200" stroke="#b32840" strokeWidth="6" />
    <path d="M104 206H142M176 184V202" stroke="#22a45a" strokeWidth="5" />
    <path d="M112 196 150 194" stroke="#3850d8" strokeWidth="5" />
    <path d="M98 105 128 70 160 64 210 72 236 92 238 130 226 168 170 188 122 194 104 180 95 130Z" fill="#b9bcd8" opacity=".85" />
    <path d="M98 108 142 100 160 176 122 193 106 184Z" fill="#dfe1ee" stroke="#9a9dbb" strokeWidth="2" />
    <path d="M158 108 212 72 236 98 226 164 178 170 162 150Z" fill="#e3e5f0" stroke="#9a9dbb" strokeWidth="2" />
    <path d="M144 98 158 108 166 170 160 178Z" fill="#8d90b4" />
    <path d="M128 72 150 68 154 88 134 92Z" fill="#dcdeeb" />
    <circle cx="164" cy="182" r="11" fill="#e8eaf2" />
    <g fill="#111" fontWeight="bold" fontFamily="Liberation Sans, sans-serif">
      <text transform="translate(184 98) rotate(73)" fontSize="20">
        REAR
      </text>
      <text transform="translate(132 182) rotate(-101)" fontSize="17">
        BOTTOM
      </text>
    </g>
    <g opacity=".75">
      <path d="M224 212 242 219V241L224 249 207 241V219Z" fill="#a2a2c6" />
      <path d="M224 226 242 219V241L224 249Z" fill="#7f7fab" />
      <path d="M258 224H272L265 232Z" fill="#35355f" />
    </g>
  </svg>
);

const AxisCross = () => (
  <svg viewBox="0 0 24 22" className="absolute right-1 bottom-5 h-[22px] w-6">
    <path d="M2 5 6 19" stroke="#9a2638" strokeWidth="1.500" />
    <path d="M0 9 2 3 5 8Z" fill="#9a2638" />
    <path d="M6 19 18 15" stroke="#1e7a46" strokeWidth="1.500" />
    <path d="M9 19 12 15 18 14 16 18Z" fill="#1e8a4c" />
    <path d="M6 19H11" stroke="#27357a" />
    <g fontSize="6" fill="#222" fontFamily="Liberation Sans, sans-serif">
      <text x="1" y="5">X</text>
      <text x="17" y="14">Y</text>
      <text x="17" y="18">Z</text>
    </g>
  </svg>
);

const Viewport = () => (
  <main className="flex min-w-0 flex-1 flex-col border-l border-[#555577]">
    <div className="relative min-h-0 flex-1 bg-linear-to-b from-[#333366] to-[#adacc4]">
      <svg viewBox="248 92 952 464" className="absolute inset-0 h-full w-full">
        <Model />
      </svg>
      <NavigationCube />
      <AxisCross />
    </div>
    <div className="flex h-[15px] shrink-0 items-stretch text-[7px] leading-none">
      <div className="flex w-[104px] items-center gap-0.5 pl-[6px]">
        <svg viewBox="0 0 16 16" className="size-[10px] shrink-0">
          <FreeCadMark />
        </svg>
        <button type="button" className="whitespace-nowrap">Стартовая страница</button>
        <button type="button" aria-label="Закрыть вкладку">
          <svg viewBox="0 0 10 10" className="size-2">
            <path d="M.5.5H9.500V9.500H.5Z" fill="#c9c9c9" stroke="#8d8d8d" />
            <path d="M3 3 7 7M7 3 3 7" stroke="#fff" strokeWidth="1.500" />
          </svg>
        </button>
      </div>
      <div className="flex w-[73px] items-center gap-[3px] bg-white pl-2">
        <svg viewBox="0 0 16 16" className="size-[10px] shrink-0">
          <FreeCadMark />
        </svg>
        <button type="button" className="whitespace-nowrap">Wheel : 1*</button>
        <button type="button" aria-label="Закрыть вкладку">
          <svg viewBox="0 0 10 10" className="size-[9px]">
            <path d="M.5.5H9.500V9.500H.5Z" fill="#e2603c" stroke="#b03c20" />
            <path d="M3 3 7 7M7 3 3 7" stroke="#fff" strokeWidth="1.500" />
          </svg>
        </button>
      </div>
    </div>
  </main>
);

const Report = () => (
  <section className="shrink-0">
    <div className="flex h-[14px] items-center justify-between border-y border-[#c9c9c9] bg-[#d9d9d9] px-[3px] text-[7px]">
      Отчет
      <DockButtons />
    </div>
    <div className="flex h-11 border-b border-l border-[#9a9a9a] bg-white">
      <div className="flex-1 overflow-hidden pl-0.5 font-['Liberation_Mono',monospace] text-[8px] leading-[10px] text-[#e03030]">
        <div className="-mt-px">
          {LOG.map((line) => (
            <p key={line} className="whitespace-pre">
              {line}
            </p>
          ))}
        </div>
      </div>
      <div className="flex w-[11px] flex-col items-center bg-[#f0f0f0]">
        <svg viewBox="0 0 8 6" className="my-1 h-[5px] w-[6px]">
          <path d="M1 5 4 1.500 7 5" fill="none" stroke="#444" strokeWidth="1.500" />
        </svg>
        <div className="mt-2 h-[11px] w-[9px] bg-[#cdcdcd]" />
        <svg viewBox="0 0 8 6" className="mt-1 h-[5px] w-[6px]">
          <path d="M1 1 4 4.500 7 1" fill="none" stroke="#444" strokeWidth="1.500" />
        </svg>
      </div>
    </div>
  </section>
);

const StatusBar = () => (
  <footer className="flex h-[18px] shrink-0 items-center justify-between font-[Roboto,sans-serif] text-[7px]">
    <span>Preselected: Wheel.Body.Hole.Face12 (7.219691 mm, 86.447250 mm, 91.875290 mm)</span>
    <div className="flex items-center pr-0.5">
      <button type="button" className="flex items-center gap-[3px] border-l border-[#dadada] pr-2 pl-[14px]">
        <svg viewBox="0 0 8 10" className="h-2 w-[6px]" fill="none" stroke="#222">
          <rect x="1" y=".7" width="6" height="8.600" rx="2" />
          <path d="M4 1V4" />
        </svg>
        CAD
        <svg viewBox="0 0 6 4" className="h-[4px] w-[5px]">
          <path d="M0 0H6L3 4Z" fill="#222" />
        </svg>
      </button>
      <span className="border-l border-[#dadada] pl-[3px]">580,21 mm x 283,25 mm</span>
    </div>
  </footer>
);

/* ---------- taskbar ---------- */

const APPS = [
  {
    name: "Пуск",
    icon: <path d="M2 3.500 7.500 2.700V7.600H2ZM8.200 2.600 14 1.800V7.600H8.200ZM2 8.300H7.500V13.300L2 12.500ZM8.200 8.300H14V14.200L8.200 13.400Z" fill="#fff" />,
  },
  {
    name: "Панель управления",
    icon: (
      <g>
        <path d="M1 3H15V13H1Z" fill="#4aaee6" />
        <path d="M2 4H14V12H2Z" fill="#7fcdf3" />
        <circle cx="5" cy="7" r="2" fill="#e8f7ff" />
        <path d="M9 6H13M9 8H13M3 10.500H13" stroke="#2478b0" />
      </g>
    ),
  },
  {
    name: "Проводник",
    running: true,
    icon: (
      <g>
        <path d="M1 2.500H6L7.500 4H15V14H1Z" fill="#e2a82d" />
        <path d="M1 5.500H15V14H1Z" fill="#fbd968" />
        <path d="M4 14V9.500H12V14H10V11.500H6V14Z" fill="#3d8fd0" />
      </g>
    ),
  },
  {
    name: "Ножницы",
    icon: (
      <g>
        <ellipse cx="7" cy="6.500" rx="6" ry="4.500" transform="rotate(-25 7 6.500)" fill="#f1e2e2" stroke="#b89a9e" />
        <path d="M4 8 12 3M5 9 11 8" stroke="#c4474b" strokeWidth="1.300" />
        <circle cx="11.500" cy="12" r="2" fill="none" stroke="#3b6ea8" strokeWidth="1.400" />
        <path d="M3 13 9 10.500" stroke="#3b6ea8" strokeWidth="1.600" />
      </g>
    ),
  },
  {
    name: "Калькулятор",
    running: true,
    icon: (
      <g>
        <path d="M2.500 1H13.500V15H2.500Z" fill="#c7d5dc" />
        <path d="M4 2.500H12V5.500H4Z" fill="#3f9fc4" />
        <path d="M4 8H6M7 8H9M10 8H12M4 10.500H6M7 10.500H9M4 13H6M7 13H9" stroke="#56717d" strokeWidth="1.500" />
        <path d="M11 9.800V14" stroke="#1f4f70" strokeWidth="2" />
      </g>
    ),
  },
  {
    name: "Telegram",
    running: true,
    icon: (
      <g>
        <circle cx="7.500" cy="7.500" r="7" fill="#2f9fdb" />
        <path d="M3 7.500 12 4 10.500 11 7.500 9 6 10.500 5.700 8.500Z" fill="#fff" />
        <path d="M8 10H16V15.500H8Z" fill="#a8adb0" />
        <path d="M10 12H14M10 13.700H13" stroke="#52585c" strokeWidth=".8" />
      </g>
    ),
  },
  {
    name: "Edge",
    icon: (
      <g>
        <circle cx="8" cy="8" r="7" fill="#1683d0" />
        <path d="M1 8C1 3 5 1 8 1 12 1 15 4 15 7.500 15 10 12.500 11 10 10 11 8 10 5.500 7 5.500 4 5.500 1.500 7 1 8Z" fill="#37c3b4" />
        <path d="M5 9C5 12.500 8.500 14.500 12.500 13 9.500 16.500 3 15.500 1.500 10 2 7.500 4 6 6 6 5.200 7 5 8 5 9Z" fill="#1459a5" />
      </g>
    ),
  },
  {
    name: "Cura",
    running: true,
    icon: (
      <g>
        <path d="M4 .8H15.200V15.200H4L.8 12V4Z" fill="#20b8e8" />
        <path d="M11.500 5H8.500L6 6.500V9.500L8.500 11H11.500" fill="none" stroke="#fff" strokeWidth="2.200" />
      </g>
    ),
  },
  {
    name: "Chrome",
    running: true,
    icon: (
      <g>
        <circle cx="7.500" cy="7.500" r="7" fill="#f2c230" />
        <path d="M7.500 7.500 1.400 4A7 7 0 0 1 13.600 4Z" fill="#dd4436" />
        <path d="M7.500 7.500 7 14.500A7 7 0 0 1 1.400 4Z" fill="#2fa351" />
        <circle cx="7.500" cy="7.500" r="3.200" fill="#fff" />
        <circle cx="7.500" cy="7.500" r="2.300" fill="#3f7fe8" />
        <circle cx="11.500" cy="11.500" r="4" fill="#eceee9" />
        <path d="M10 13.500V10L12 9 13 13.500Z" fill="#55584e" />
      </g>
    ),
  },
  { name: "FreeCAD", running: true, current: true, icon: <FreeCadMark /> },
];

const Taskbar = () => (
  <div className="flex h-[25px] shrink-0 items-stretch justify-between bg-linear-to-r from-[#20363f] to-[#18243f] font-['Open_Sans','Noto_Sans',sans-serif] text-white">
    <div className="grid w-[307px] grid-cols-10">
      {APPS.map((app) => (
        <button
          key={app.name}
          type="button"
          aria-label={app.name}
          className={clsx("flex flex-col items-center justify-between px-[3px]", app.current && "bg-[#4c5f68]")}
        >
          <svg viewBox="0 0 16 16" className={clsx("my-auto", app.name === "Пуск" ? "size-[14px]" : "size-4")}>
            {app.icon}
          </svg>
          <span className={clsx("h-0.5 w-full", app.running && "bg-[#76b9ed]")} />
        </button>
      ))}
    </div>
    <div className="flex items-center text-[8px]">
      <button type="button" className="flex items-center gap-[6px]">
        <svg viewBox="0 0 16 16" className="size-[14px]">
          <path d="M6 1A5 5 0 1 0 11 8 5 5 0 0 1 6 1Z" fill="#f6c42c" />
          <path d="M4 14.500A3 3 0 0 1 4 8.500 4 4 0 0 1 11 8.500 3 3 0 1 1 13 14.500Z" fill="#dceaf6" />
        </svg>
        <span>-3°C&nbsp; Пер. облачность</span>
      </button>
      <div className="ml-[10px] flex items-center gap-[6px]">
        <svg viewBox="0 0 10 6" className="h-[5px] w-2" fill="none" stroke="#fff">
          <path d="M1 5 5 1 9 5" />
        </svg>
        <svg viewBox="0 0 12 10" className="h-[9px] w-[11px]" fill="none" stroke="#fff" strokeWidth=".9">
          <path d="M3.500 1.500H11V7H3.500M6 9H9.500M7.500 7V9M.8 1.500H3.500V4.500H.8ZM2 4.500V9H5" />
        </svg>
        <svg viewBox="0 0 12 10" className="h-[9px] w-[11px]" fill="none" stroke="#fff" strokeWidth=".9">
          <path d="M1 3.500H3L5.500 1.200V8.800L3 6.500H1ZM7 3.500Q8 5 7 6.500M8.700 2.300Q10.300 5 8.700 7.700M10.200 1.200Q12.500 5 10.200 8.800" />
        </svg>
        <button type="button" className="text-[7px]">РУС</button>
      </div>
      <div className="ml-2 text-center font-[Roboto,sans-serif] text-[7px] leading-[11px]">
        <p>1:17</p>
        <p>22.01.2022</p>
      </div>
      <button type="button" aria-label="Уведомления" className="mr-3 ml-[11px]">
        <svg viewBox="0 0 12 12" className="size-3" fill="none" stroke="#fff" strokeWidth="1">
          <path d="M1 1.500H11V9H8L6 11 4 9H1Z" />
        </svg>
      </button>
      <div className="h-full w-[3px] border-l border-[#55607a]" />
    </div>
  </div>
);

const App = () => (
  <div className="flex h-screen flex-col overflow-hidden bg-[#f0f0f0] font-['Open_Sans','Noto_Sans',sans-serif] text-[#1a1a1a]">
    <TitleBar />
    <Toolbars />
    <div className="flex min-h-0 flex-1 gap-[5px]">
      <ComboPanel />
      <Viewport />
    </div>
    <div className="h-[3px] shrink-0" />
    <Report />
    <StatusBar />
    <Taskbar />
  </div>
);

export default App;
